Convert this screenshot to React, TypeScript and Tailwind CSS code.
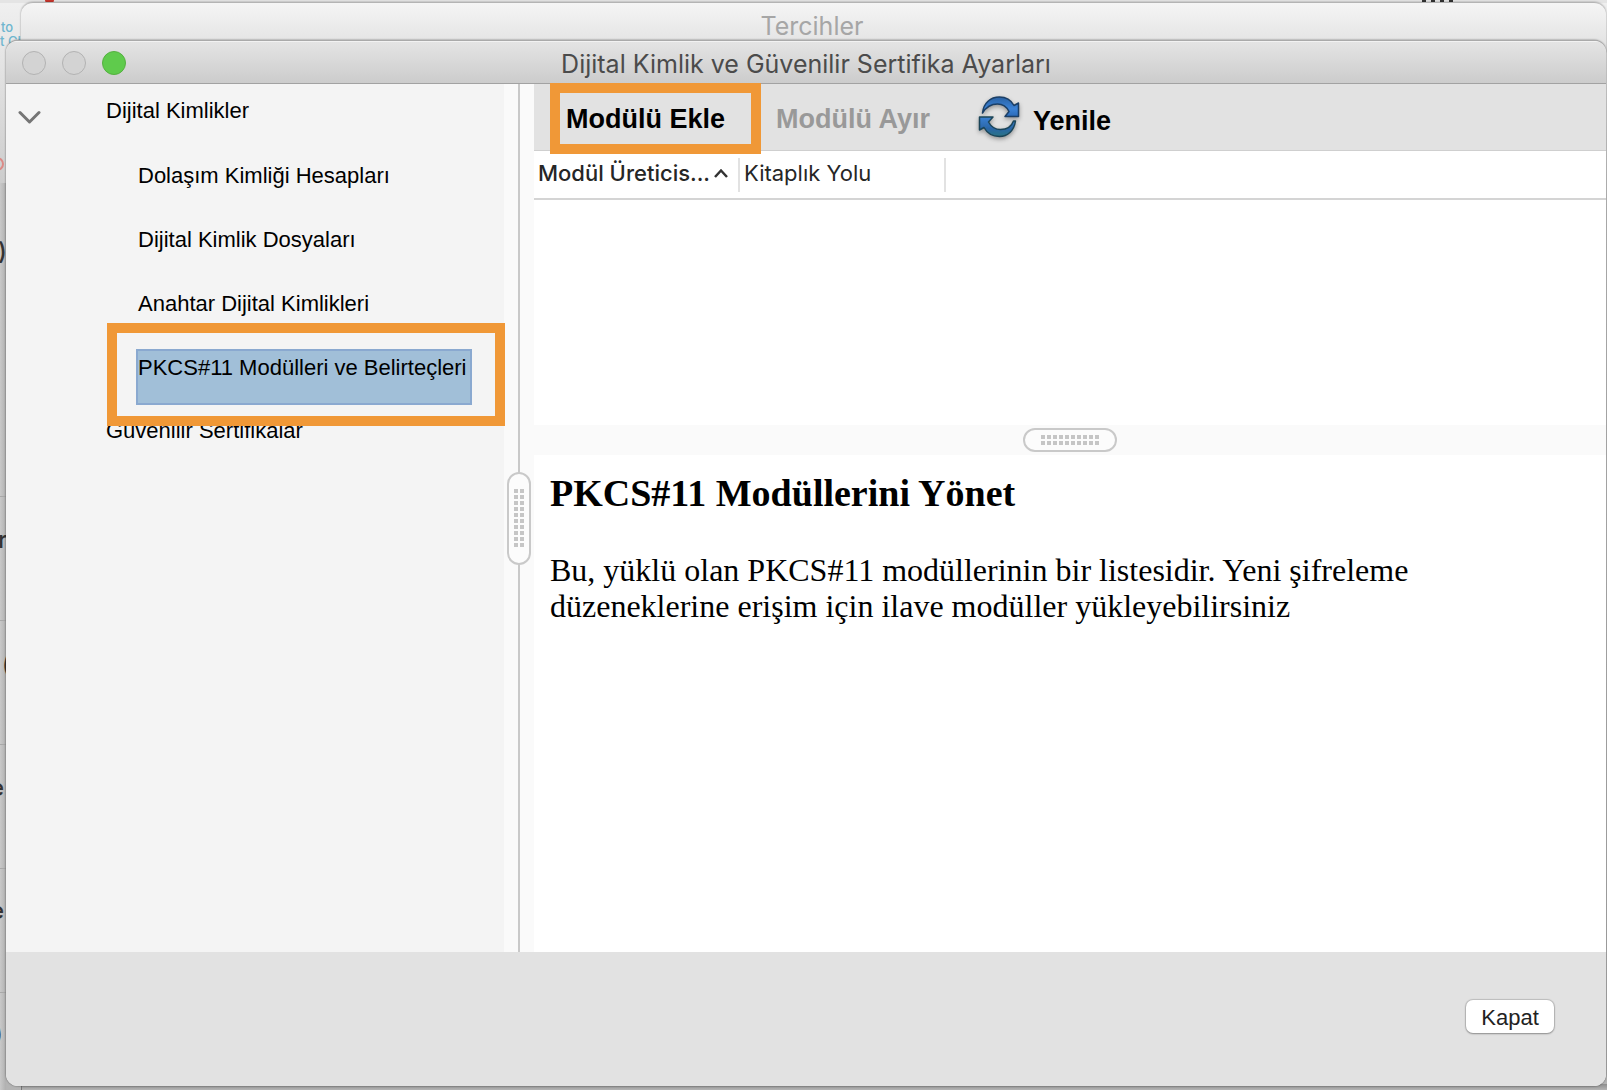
import React from "react";

const SANS = "font-['Liberation_Sans',Arial,sans-serif]";

const childItems = [
  "Dolaşım Kimliği Hesapları",
  "Dijital Kimlik Dosyaları",
  "Anahtar Dijital Kimlikleri",
];

function Backdrop() {
  return (
    <div aria-hidden="true" className="absolute inset-0 overflow-hidden bg-linear-to-b from-[#f0f0f0] via-[#c6c6c6] via-20% to-[#b4b4b4] font-['Inter',sans-serif]">
      <div className="absolute inset-x-0 top-0 h-[3px] bg-[#e4e4e4]" />
      <div className="absolute top-0 left-[45px] h-[3px] w-[9px] rounded-b-full bg-[#c8362c]" />
      <div className="absolute top-0 left-[1422px] h-[2px] w-[34px] bg-[repeating-linear-gradient(90deg,#333_0_4px,transparent_4px_9px)]" />
      <div className="absolute top-[20px] left-0 text-[13px] leading-[14px] font-medium whitespace-nowrap text-[#6fb6cf]">
        <div className="pl-[1px]">to</div>
        <div>t Clo</div>
      </div>
      <div className="absolute top-[157px] -left-[10px] size-[14px] rounded-full border-2 border-[#dc8a86]" />
      <div className="absolute top-[183px] bottom-0 left-0 w-[6px] bg-linear-to-r from-[#c9c9c9] to-[#b0b0b0]" />
      <div className="absolute top-[496px] left-0 h-px w-[6px] bg-[#a8a8a8]" />
      <div className="absolute top-[620px] left-0 h-px w-[6px] bg-[#a8a8a8]" />
      <div className="absolute top-[744px] left-0 h-px w-[6px] bg-[#a8a8a8]" />
      <div className="absolute top-[868px] left-0 h-px w-[6px] bg-[#a8a8a8]" />
      <div className="absolute top-[992px] left-0 h-px w-[6px] bg-[#a8a8a8]" />
      <div className="text-[24px] leading-[28px] font-medium text-[#333]">
        <span className="absolute top-[238px] -left-[2px]">)</span>
        <span className="absolute top-[526px] -left-[2px]">r</span>
        <span className="absolute top-[651px] left-[2px]">(</span>
        <span className="absolute top-[774px] -left-[10px]">e</span>
        <span className="absolute top-[897px] -left-[10px]">e</span>
        <span className="absolute top-[1020px] -left-[6px]">)</span>
      </div>
      <div className="absolute bottom-0 left-[21px] h-[6px] w-px bg-[#777]" />
      <div className="absolute right-0 bottom-0 left-[22px] h-[6px] bg-linear-to-b from-[#8e8e8e] to-[#b4b4b4]" />
    </div>
  );
}

function RefreshIcon() {
  return (
    <svg width="42" height="44" viewBox="0 0 42 44" className="drop-shadow-[0_2px_2px_rgba(0,0,0,0.35)]" aria-hidden="true">
      <defs>
        <linearGradient id="blueArrow" x1="0" y1="0" x2="0" y2="1">
          <stop offset="0" stopColor="#2a62a4" />
          <stop offset="0.6" stopColor="#3b82d6" />
          <stop offset="1" stopColor="#2b6ab8" />
        </linearGradient>
        <linearGradient id="tealArrow" x1="0" y1="0" x2="0" y2="1">
          <stop offset="0" stopColor="#3a80d4" />
          <stop offset="0.6" stopColor="#2a66a6" />
          <stop offset="1" stopColor="#2a7484" />
        </linearGradient>
      </defs>
      <path d="M4.500 18C5.500 8 12.500 2 21.500 2C28 2 33 5 36 10.500L40.500 8V21.500H27L31 16.500C28.500 11.500 25 9 19.500 9C13 9 8.500 11.500 4.500 18Z" fill="url(#blueArrow)" stroke="#1b3f66" strokeWidth="1.500" strokeLinejoin="round" />
      <path d="M37.500 26C36 36 29.500 41.500 21.500 41.500C14 41.500 9 38 6 32.500L1.500 35V22H15L10.500 27C13 31.500 17.500 34.500 22.500 34.500C29 34.500 33.500 31.500 35.500 26Z" fill="url(#tealArrow)" stroke="#1b4558" strokeWidth="1.500" strokeLinejoin="round" />
    </svg>
  );
}

function GripDots({ cols, rows }: { cols: number; rows: number }) {
  const dots = [];
  for (let r = 0; r < rows; r++)
    for (let c = 0; c < cols; c++)
      dots.push(<rect key={r + "-" + c} x={c * 6} y={r * 6} width="4" height="4" />);
  return (
    <svg width={cols * 6 - 2} height={rows * 6 - 2} fill="#c6c6c6" aria-hidden="true">
      {dots}
    </svg>
  );
}

function Sidebar() {
  return (
    <nav className={`w-[498px] shrink-0 bg-[#f4f4f4] text-[22px] leading-[28px] text-black ${SANS}`}>
      <ul>
        <li className="flex h-16 items-start pt-[9px]">
          <button type="button" aria-label="Daralt" className="mt-[15px] ml-[10px] p-0.5">
            <svg width="24" height="16" viewBox="0 0 24 16" fill="none" stroke="#757575" strokeWidth="3" strokeLinecap="round" strokeLinejoin="round" aria-hidden="true">
              <path d="M2 2.500L11.500 12L21 2.500" />
            </svg>
          </button>
          <button type="button" className="ml-[62px] pt-1 text-left">Dijital Kimlikler</button>
        </li>
        {childItems.map((label) => (
          <li key={label} className="h-16 pt-[9px] pl-[130px]">
            <button type="button" className="h-14 border-2 border-transparent pt-0.5 text-left">
              <span className="block h-[48px]">{label}</span>
            </button>
          </li>
        ))}
        <li className="relative h-16 pt-[9px] pl-[130px]">
          <button type="button" aria-current="true" className="h-14 w-[336px] border-2 border-[#8aa9d0] bg-[#a1bfd8] pt-0.5 text-left whitespace-nowrap">
            <span className="block h-[48px]">PKCS#11 Modülleri ve Belirteçleri</span>
          </button>
          <div className="pointer-events-none absolute -top-[17px] -right-px -bottom-[22px] left-[101px] z-10 border-10 border-[#f09837]" />
        </li>
        <li className="h-16 pt-[9px] pl-[100px]">
          <button type="button" className="pt-1 text-left">Güvenilir Sertifikalar</button>
        </li>
      </ul>
    </nav>
  );
}

function Toolbar() {
  return (
    <div className={`flex h-[67px] items-center border-b border-[#cfcfcf] bg-[#e2e2e2] text-[27px] font-bold ${SANS}`}>
      <button type="button" className="relative ml-4 h-full w-[211px] pt-1 pl-4 text-left text-black">
        Modülü Ekle
        <span className="pointer-events-none absolute inset-x-0 -top-px -bottom-[4px] border-10 border-[#f09837]" />
      </button>
      <button type="button" disabled className="ml-[15px] pt-1 text-[#999]">Modülü Ayır</button>
      <button type="button" className="ml-[48px] flex items-center gap-[13px] text-black">
        <RefreshIcon />
        <span className="pt-2">Yenile</span>
      </button>
    </div>
  );
}

function ModuleTable() {
  return (
    <div className="h-[274px] bg-white font-['Inter',sans-serif] text-[22px] leading-[28px] text-[#262626]">
      <table className="w-full table-fixed border-collapse">
        <thead>
          <tr className="h-[48px] border-b-2 border-[#d4d4d4]">
            <th scope="col" aria-sort="ascending" className="w-[206px] p-0 text-left font-medium">
              <div className="flex h-[34px] items-center justify-between border-r-2 border-[#e2e2e2] pr-[10px] pl-1">
                <button type="button" className="pb-1 whitespace-nowrap">Modül Üreticis...</button>
                <svg width="14" height="14" viewBox="0 0 14 14" fill="none" stroke="#333" strokeWidth="2.500" className="shrink-0" aria-hidden="true">
                  <path d="M1 9L7 2.500L13 9" />
                </svg>
              </div>
            </th>
            <th scope="col" className="w-[206px] p-0 text-left font-normal">
              <div className="flex h-[34px] items-center border-r-2 border-[#e2e2e2] pl-1">
                <button type="button" className="pb-1">Kitaplık Yolu</button>
              </div>
            </th>
            <td />
          </tr>
        </thead>
      </table>
    </div>
  );
}

export default function App() {
  return (
    <div className="relative flex min-h-screen flex-col overflow-hidden pt-[2px] pr-px pb-[4px] pl-1.5">
      <Backdrop />
      <header className="relative z-10 ml-[15px] h-[50px] shrink-0 rounded-t-[12px] border-t border-[#b4b4b4] bg-linear-to-b from-[#f5f5f5] to-[#e4e4e4] to-80% pr-[3px] text-center font-['Inter',sans-serif] text-[25px] leading-[46px] text-[#a6a6a6] shadow-[0_0_2px_rgba(0,0,0,0.4)]">
        Tercihler
      </header>
      <main className="relative z-20 -mt-[12px] flex flex-1 flex-col overflow-hidden rounded-[12px] border-t border-[#aaa] bg-white shadow-[0_0_2px_rgba(0,0,0,0.6)]">
        <header className="relative flex h-[43px] shrink-0 items-center border-t border-b border-t-[#f2f2f2] border-b-[#a2a2a2] bg-linear-to-b from-[#e4e4e4] to-[#cccccc]">
          <div className="flex gap-4 pt-px pl-4">
            <button type="button" aria-label="Pencereyi kapat" className="size-6 rounded-full border border-[#b2b2b2] bg-[#d3d3d3]" />
            <button type="button" aria-label="Simge durumuna küçült" className="size-6 rounded-full border border-[#b2b2b2] bg-[#d3d3d3]" />
            <button type="button" aria-label="Büyüt" className="size-6 rounded-full border border-[#55b040] bg-[#5fcb4c]" />
          </div>
          <h1 className="flex-1 pt-[3px] pr-[120px] text-center font-['Inter',sans-serif] text-[25px] leading-[32px] whitespace-nowrap text-[#4b4b4b]">
            Dijital Kimlik ve Güvenilir Sertifika Ayarları
          </h1>
        </header>
        <div className="flex flex-1">
          <Sidebar />
          <div role="separator" aria-orientation="vertical" className="relative flex w-[30px] shrink-0 items-center justify-center bg-[#fafafa]">
            <div className="absolute inset-y-0 left-[14px] w-[2px] bg-[#c9c9c9]" />
            <div className="relative flex h-[93px] w-6 items-center justify-center rounded-full border-2 border-[#c9c9c9] bg-[#fcfcfc]">
              <GripDots cols={2} rows={10} />
            </div>
          </div>
          <section className="flex min-w-0 flex-1 flex-col">
            <Toolbar />
            <ModuleTable />
            <div role="separator" aria-orientation="horizontal" className="flex h-[30px] shrink-0 items-center justify-center bg-[#fafafa]">
              <div className="flex h-6 w-[94px] items-center justify-center rounded-full border-2 border-[#c9c9c9] bg-[#fcfcfc]">
                <GripDots cols={10} rows={2} />
              </div>
            </div>
            <article className="flex-1 bg-white pt-4 pl-4 font-['Liberation_Serif','Times_New_Roman',serif] text-black">
              <h2 className="text-[38px] leading-[44px] font-bold">PKCS#11 Modüllerini Yönet</h2>
              <p className="mt-[37px] max-w-[920px] text-[32px] leading-[36px]">
                Bu, yüklü olan PKCS#11 modüllerinin bir listesidir. Yeni şifreleme düzeneklerine erişim için ilave modüller yükleyebilirsiniz
              </p>
            </article>
          </section>
        </div>
        <footer className={`flex h-[134px] shrink-0 items-start justify-end bg-[#e2e2e2] pt-12 pr-[52px] ${SANS}`}>
          <button type="button" className="h-[33px] w-[88px] rounded-[7px] bg-white pt-0.5 text-[22px] leading-[31px] text-[#222] shadow-[0_0_1px_1px_rgba(0,0,0,0.16),0_1px_2px_rgba(0,0,0,0.25)]">Kapat</button>
        </footer>
      </main>
    </div>
  );
}
